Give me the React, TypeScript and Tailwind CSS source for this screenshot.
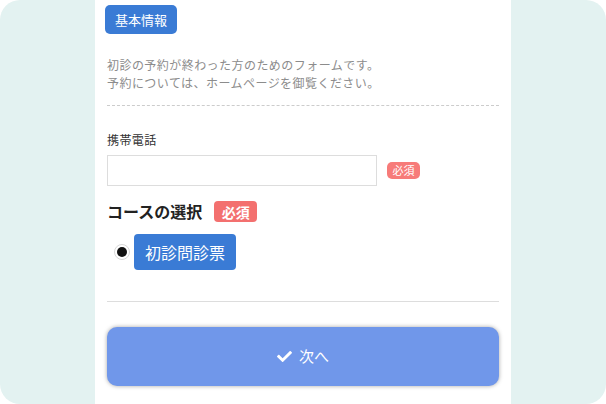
import React from 'react';
import { FaCheck } from 'react-icons/fa';

const font = { fontFamily: '"Noto Sans CJK JP", "Noto Sans", sans-serif' };

const Required: React.FC<{ big?: boolean }> = ({ big }) =>
    big ? (
        <span className="inline-flex items-center justify-center h-[21px] w-[43px] rounded-[4px] bg-[#f3706f] text-white text-[14px] font-bold leading-none">
            必須
        </span>
    ) : (
        <span className="inline-flex items-center justify-center h-[17px] w-[33px] rounded-[5px] bg-[#f77b79] text-white text-[11px] leading-none">
            必須
        </span>
    );

const App: React.FC = () => {
    return (
        <div className="w-[606px] h-[404px] rounded-[20px] bg-[#e3f2f1] flex justify-center overflow-hidden" style={font}>
            <div className="w-[416px] h-full bg-white px-3 pt-[5px]">
                <span className="ml-[-2px] inline-block h-[29px] px-[10px] rounded-[5px] bg-[#3a7bd5] text-white text-[13px] leading-[29px]">
                    基本情報
                </span>

                <p className="mt-[22px] text-[12px] leading-[18px] tracking-[0.45px] text-[#8c8c8c]">
                    初診の予約が終わった方のためのフォームです。
                    <br />
                    予約については、ホームページを御覧ください。
                </p>

                <div className="mt-[13px] border-t border-dashed border-[#ccc]" />

                <label className="block mt-[25px] text-[12px] leading-[18px] tracking-[0.4px] text-[#333]">携帯電話</label>
                <div className="mt-[6px] flex items-center gap-[10px]">
                    <input type="tel" className="w-[270px] h-[31px] border border-[#ddd] outline-none px-2 text-[14px]" />
                    <Required />
                </div>

                <div className="mt-[15px] flex items-center gap-3">
                    <h2 className="text-[16px] font-bold text-[#222] leading-[21px]">コースの選択</h2>
                    <Required big />
                </div>

                <div className="mt-3 flex items-center pl-[7px] gap-1">
                    <span className="w-4 h-4 rounded-full border border-[#d8d8d8] bg-white flex items-center justify-center">
                        <span className="w-[10px] h-[10px] rounded-full bg-[#111]" />
                    </span>
                    <span className="inline-flex items-center h-9 px-[11px] rounded-[4px] bg-[#3a7bd5] text-white text-[16px]">
                        初診問診票
                    </span>
                </div>

                <div className="mt-[31px] border-t border-[#ddd]" />

                <button className="mt-[25px] w-full h-[59px] rounded-[10px] bg-[#7097ea] text-white text-[15px] flex items-center justify-center gap-[7px] shadow-[0_0_4px_rgba(0,0,0,0.35)]">
                    <FaCheck className="w-[15px] h-[15px]" />
                    次へ
                </button>
            </div>
        </div>
    );
};

export default App;
